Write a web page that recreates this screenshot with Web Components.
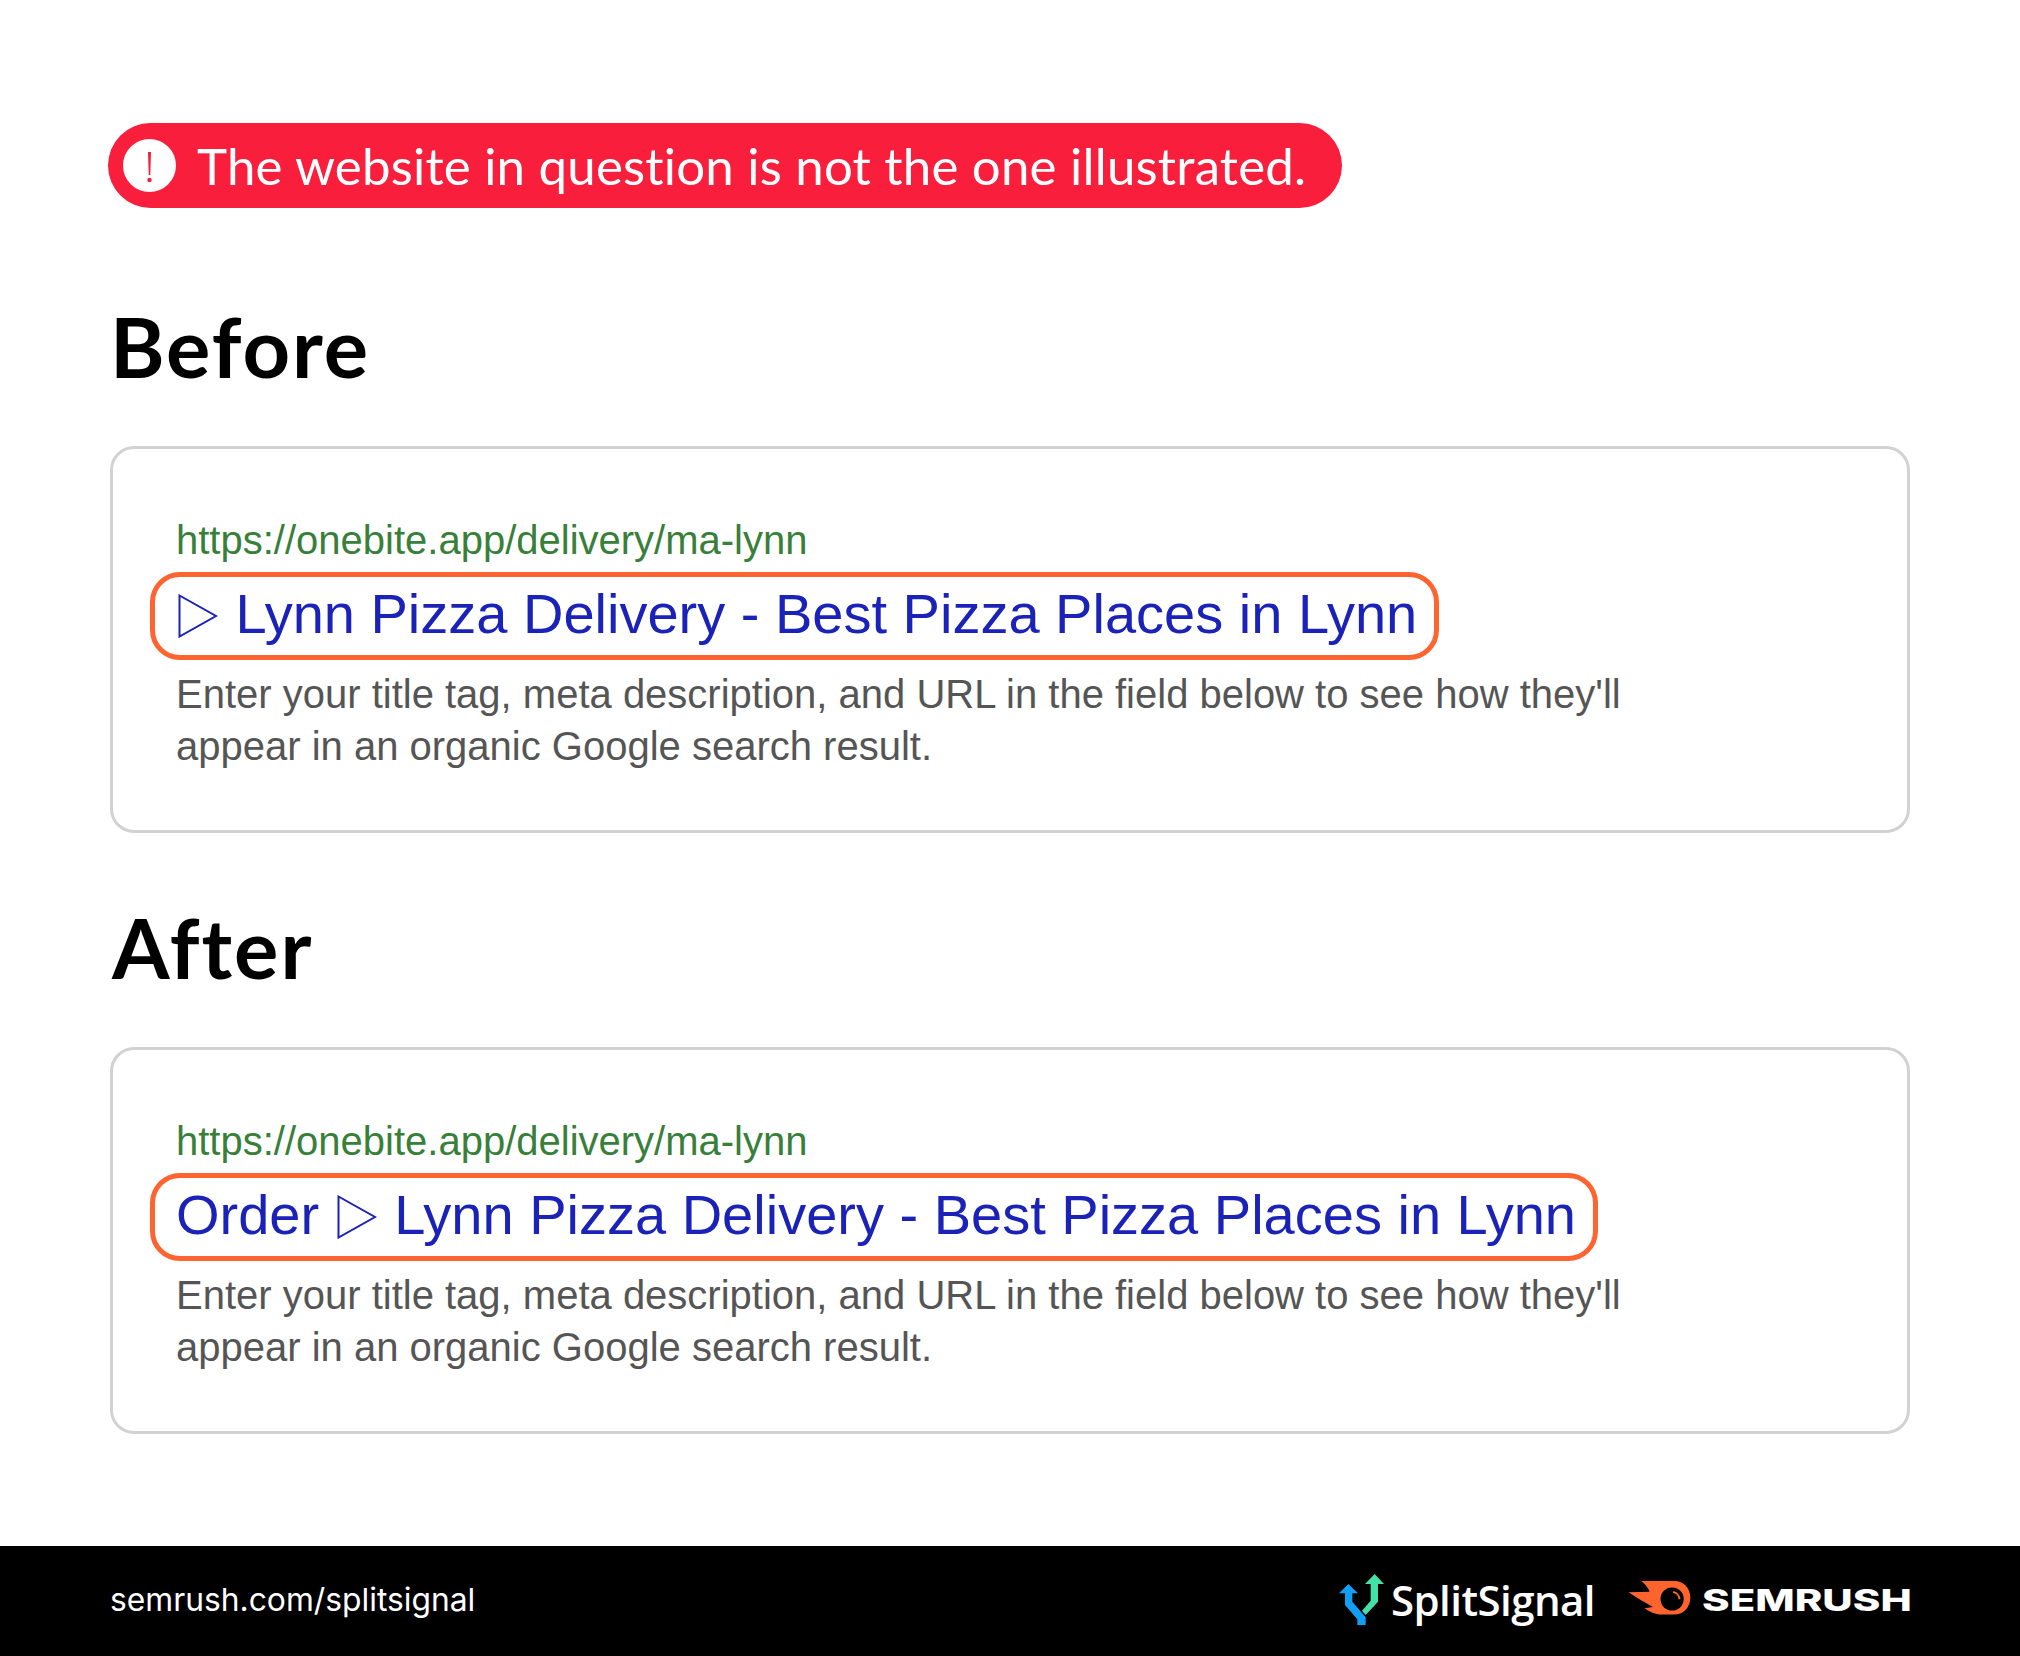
<!DOCTYPE html>
<html><head><meta charset="utf-8"><style>
html,body{margin:0;padding:0;background:#fff}
body{width:2020px;height:1656px;display:flex;flex-direction:column;font-family:"Liberation Sans",sans-serif}
</style></head><body>
<sp-page></sp-page>
<script>
class SpAlert extends HTMLElement{constructor(){super();this.attachShadow({mode:'open'}).innerHTML=`<style>
:host{display:flex;align-items:center;width:1234px;height:85px;box-sizing:border-box;background:#f91e3c;border-radius:42.5px;padding-left:15px;gap:21px;color:#fff;font:400 51px/1 Lato,sans-serif;font-variant-ligatures:none;letter-spacing:.2px;white-space:nowrap}
.i{width:53px;height:53px;border-radius:50%;background:#fff;display:flex;flex:none}
svg{width:53px;height:53px}
</style><span class="i"><svg viewBox="0 0 53 53"><path d="M25 13h3l-.7 23h-1.6z" fill="#f91e3c"/><circle cx="26.5" cy="41" r="2.2" fill="#f91e3c"/></svg></span><span><slot></slot></span>`}}
customElements.define('sp-alert',SpAlert);
class SpHeading extends HTMLElement{constructor(){super();this.attachShadow({mode:'open'}).innerHTML=`<style>
:host{display:block;font:700 83px/100px Lato,sans-serif;letter-spacing:2px;color:#000}
</style><slot></slot>`}}
customElements.define('sp-heading',SpHeading);
class SpSnippet extends HTMLElement{constructor(){super();this.attachShadow({mode:'open'}).innerHTML=`<style>
:host{display:block;box-sizing:border-box;width:1800px;height:387px;border:3px solid #d2d2d2;border-radius:24px;padding:68px 0 0 37px;font-family:"Liberation Sans",sans-serif}
.u{color:#38803a;font-size:40px;line-height:46px;padding-left:26px}
.t{display:inline-flex;align-items:center;box-sizing:border-box;height:88px;margin-top:9px;border:5px solid #ff6430;border-radius:30px;padding:0 17px 6px 21px;color:#1a22b8;font-size:56px;white-space:nowrap}
.d{color:#555;font-size:40px;line-height:52px;padding-left:26px;margin-top:8px;width:1480px}
</style><div class="u"><slot name="url"></slot></div><div class="t"><span><slot name="title"></slot></span></div><div class="d"><slot name="desc"></slot></div>`}}
customElements.define('sp-snippet',SpSnippet);
class SpTri extends HTMLElement{constructor(){super();this.attachShadow({mode:'open'}).innerHTML=`<style>
:host{display:inline-block;width:40px;height:44px;vertical-align:-5px;margin:0 2px 0 2px}svg{display:block;width:40px;height:44px}
</style><svg viewBox="0 0 40 44"><path d="M1.5 1.5 L38 22 L1.5 42.5 Z" fill="none" stroke="#1a22b8" stroke-width="2"/></svg>`}}
customElements.define('sp-tri',SpTri);
class SpFooter extends HTMLElement{constructor(){super();this.attachShadow({mode:'open'}).innerHTML=`<style>
:host{display:flex;align-items:center;justify-content:space-between;height:110px;background:#000;color:#fff;padding:0 110px;box-sizing:border-box;font:400 31.8px/1 Inter,sans-serif}
.l{margin-top:-2px}
.r{display:flex;align-items:center}
.s{display:flex;align-items:center;font:600 42px/1 "Open Sans",sans-serif;letter-spacing:-.55px}
.s span{margin-top:-2px}
.s svg{margin:-4px 7px 0 0}
.m{display:flex;align-items:center;margin-left:33px;font:800 30px/1 Inter,sans-serif}
.m svg{margin:-6px 11px 0 0}
.w{display:inline-block;width:208px;transform:scaleX(1.395);transform-origin:left center;white-space:nowrap;margin-top:-2px}
svg{display:block}
</style><span class="l"><slot></slot></span><span class="r"><span class="s"><svg width="45" height="51" viewBox="55 42 135 153"><path fill="#45e0a8" d="M162 42 L190 72 L172 72 L172 125 L135 165 L124 152 L150 122 L150 72 L133 72 Z"/><path fill="#0fa0f5" d="M83 72 L112 100 L95 100 L95 125 L135 172 L135 195 L110 195 L110 178 L73 135 L73 100 L55 100 Z"/></svg><span>SplitSignal</span></span><span class="m"><svg width="63" height="34" viewBox="10 18 190 102"><path fill="#ff642d" d="M50 18 H150 C178 18 198 40 198 68 C198 98 176 119 148 119 H112 C92 119 75 110 60 100 L85 96 C65 85 35 68 12 52 L75 50 C72 40 62 28 50 18Z"/><circle cx="143" cy="72" r="35" fill="#000"/><path d="M146 51 C157 53 165 62 165 73" fill="none" stroke="#ff642d" stroke-width="6"/></svg><span class="w">SEMRUSH</span></span></span>`}}
customElements.define('sp-footer',SpFooter);
class SpPage extends HTMLElement{constructor(){super();this.attachShadow({mode:'open'}).innerHTML=`<style>
:host{display:flex;flex-direction:column;width:2020px;height:1656px}
main{flex:1;padding:123px 110px 0;display:flex;flex-direction:column;align-items:flex-start}
sp-alert{margin-left:-2px}
.h1{margin-top:88px}.h2{margin:64px 0 0 2px}
sp-snippet{margin-top:50px}
</style><main>
<sp-alert>The website in question is not the one illustrated.</sp-alert>
<sp-heading class="h1">Before</sp-heading>
<sp-snippet><span slot="url">https://onebite.app/delivery/ma-lynn</span><span slot="title"><sp-tri></sp-tri> Lynn Pizza Delivery - Best Pizza Places in Lynn</span><span slot="desc">Enter your title tag, meta description, and URL in the field below to see how they'll appear in an organic Google search result.</span></sp-snippet>
<sp-heading class="h2">After</sp-heading>
<sp-snippet><span slot="url">https://onebite.app/delivery/ma-lynn</span><span slot="title">Order <sp-tri></sp-tri> Lynn Pizza Delivery - Best Pizza Places in Lynn</span><span slot="desc">Enter your title tag, meta description, and URL in the field below to see how they'll appear in an organic Google search result.</span></sp-snippet>
</main><sp-footer>semrush.com/splitsignal</sp-footer>`}}
customElements.define('sp-page',SpPage);
</script></body></html>
